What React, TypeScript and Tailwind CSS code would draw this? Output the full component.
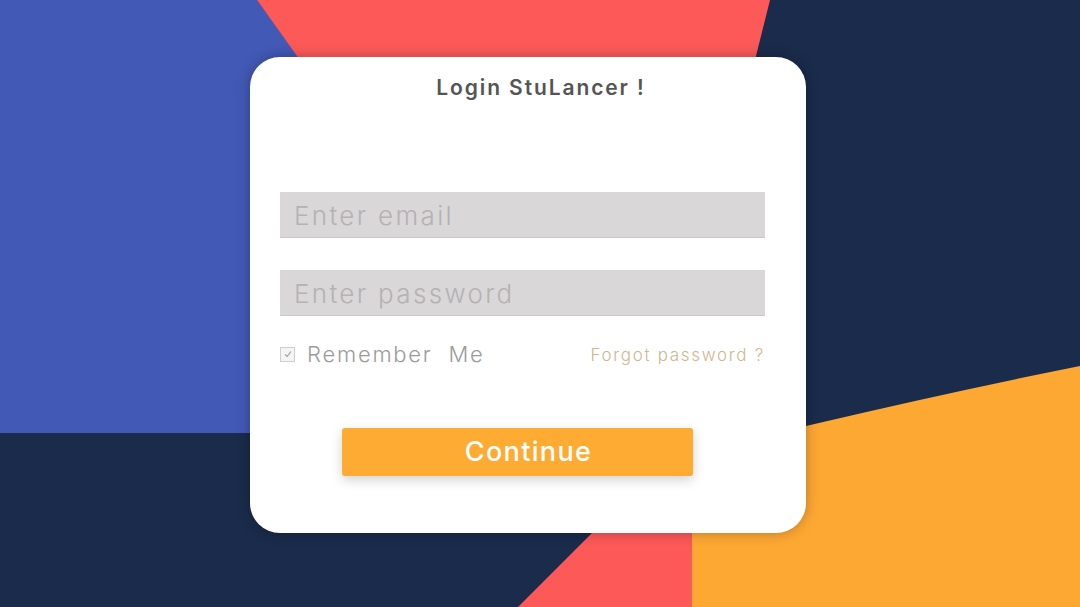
const font = { fontFamily: "Inter, 'Noto Sans', sans-serif" };

function Background() {
  return (
    <svg className="absolute inset-0 h-full w-full" viewBox="0 0 1080 607" preserveAspectRatio="none">
      <rect x="0" y="0" width="1080" height="607" fill="#1b2b4b" />
      <polygon points="0,0 257,0 420,220 420,433 0,433" fill="#4259b6" />
      <polygon points="257,0 770,0 720,200 400,200" fill="#fd5959" />
      <path d="M692,607 L1080,607 L1080,366 Q950,392 806,426 L692,460 Z" fill="#fea834" />
      <polygon points="625,500 692,500 692,607 518,607" fill="#fd5959" />
    </svg>
  );
}

export default function App() {
  return (
    <div className="relative h-[607px] w-full overflow-hidden" style={font}>
      <Background />
      <div className="relative pl-[250px] pt-[57px]">
        <div className="flex h-[476px] w-[556px] flex-col rounded-[30px] bg-white px-[30px] pt-[17px] shadow-[0_0_14px_rgba(0,0,0,0.28)]">
          <h1 className="pl-[26px] text-center text-[21px] font-semibold leading-7 tracking-[0.09em] text-[#555555]">
            Login StuLancer !
          </h1>

          <input
            placeholder="Enter email"
            className="mt-[90px] h-[46px] w-[485px] border-b border-[#c9c7c8] bg-[#d9d7d8] px-[14px] pt-[2px] text-[26px] font-light tracking-[0.09em] text-[#666] outline-none placeholder:text-[#b4b2b3]"
          />
          <input
            placeholder="Enter password"
            type="text"
            className="mt-[32px] h-[46px] w-[485px] border-b border-[#c9c7c8] bg-[#d9d7d8] px-[14px] pt-[2px] text-[26px] font-light tracking-[0.09em] text-[#666] outline-none placeholder:text-[#b4b2b3]"
          />

          <div className="mt-[26px] flex h-6 w-[485px] items-center justify-between">
            <label className="flex items-center gap-[12px] text-[22px] font-light tracking-[0.08em] text-[#9b9b9b]">
              <span className="flex h-[15px] w-[15px] items-center justify-center border border-[#cfcfcf] bg-[#f4f4f4]">
                <svg viewBox="0 0 12 12" className="h-[10px] w-[10px]">
                  <path d="M2.5 6.5 L5 9 L9.5 3" fill="none" stroke="#9a9a9a" strokeWidth="1.3" />
                </svg>
              </span>
              <span className="whitespace-pre">Remember  Me</span>
            </label>
            <a className="pt-[3px] text-[17px] font-light tracking-[0.1em] text-[#d2b591]">Forgot password ?</a>
          </div>

          <button className="ml-[62px] mt-[62px] flex h-[48px] w-[351px] items-center justify-center rounded-[3px] bg-[#fdab33] pl-[22px] text-[27px] font-medium tracking-[0.05em] text-white shadow-[0_4px_12px_rgba(0,0,0,0.18)]">
            Continue
          </button>
        </div>
      </div>
    </div>
  );
}
